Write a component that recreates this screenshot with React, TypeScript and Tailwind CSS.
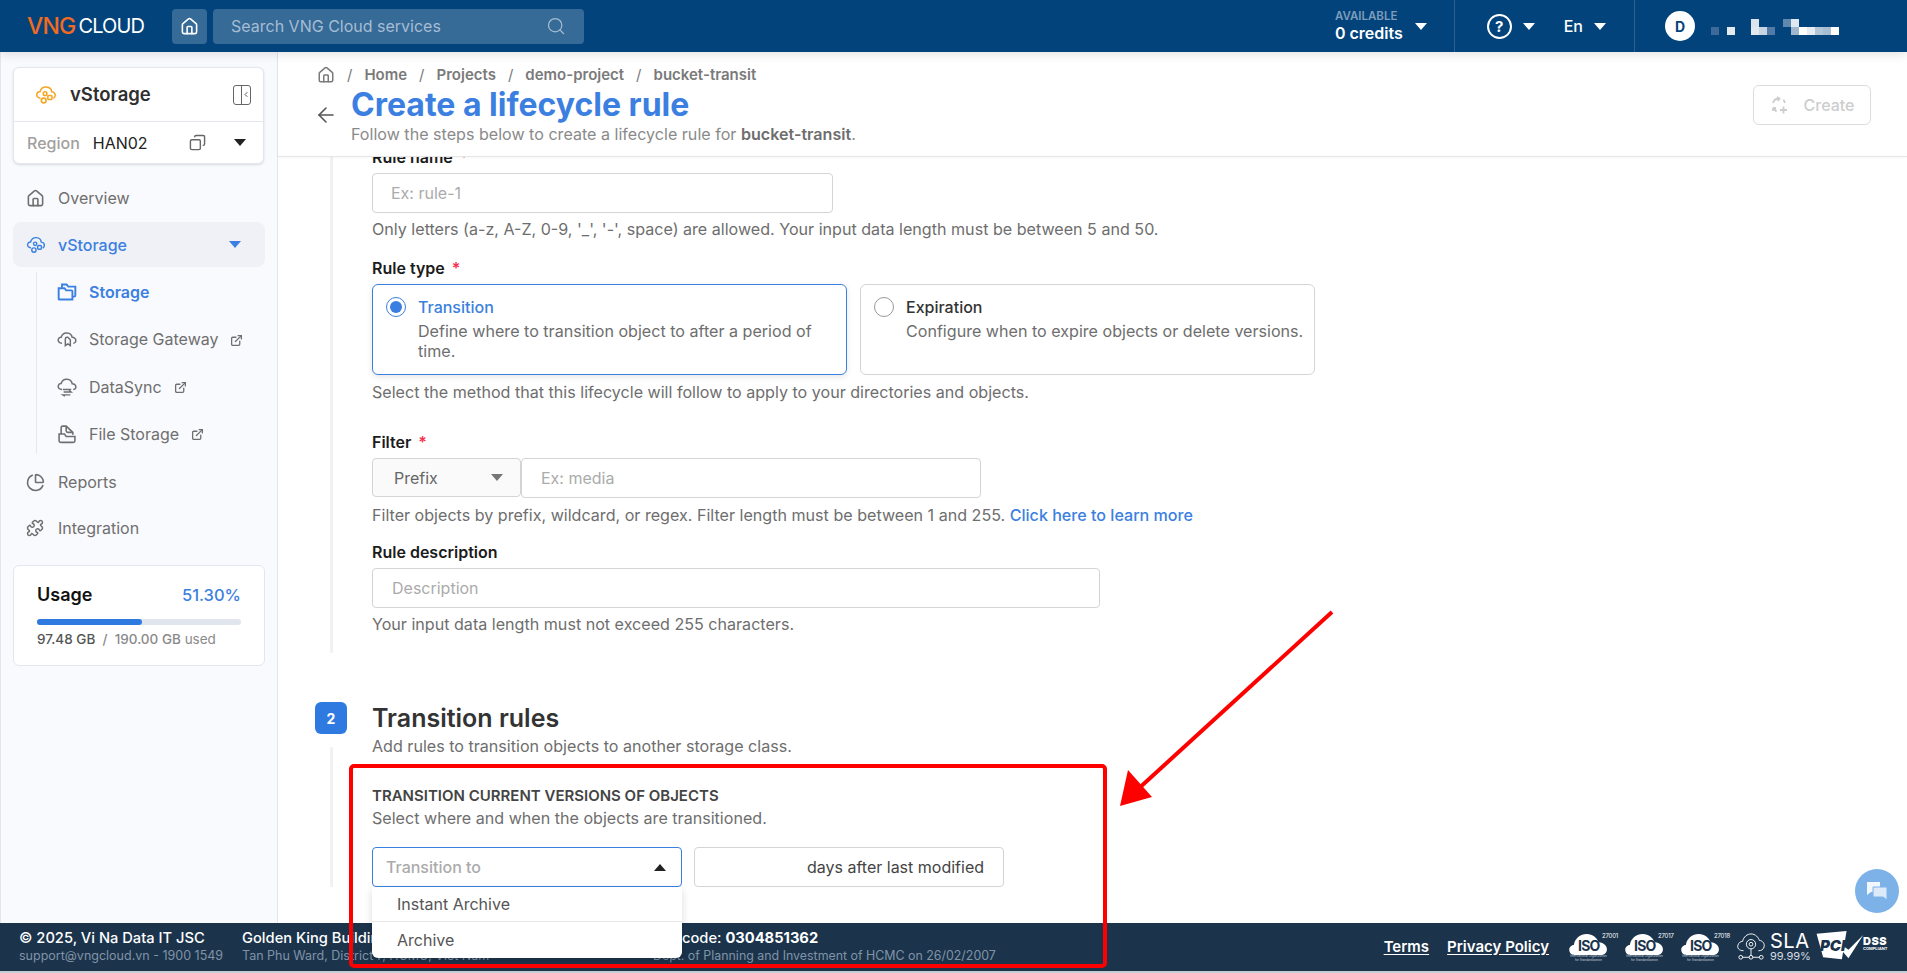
import { ArrowLeft, ChevronLeft, Copy, ExternalLink, Home, PieChart, Puzzle, Search } from 'lucide-react';

const font = 'font-["Inter","Liberation_Sans",sans-serif]';

function Caret({ className = '', up = false }: { className?: string; up?: boolean }) {
  return (
    <svg viewBox="0 0 12 7" className={`h-[7px] w-3 fill-current ${className}`}>
      <path d={up ? 'M6 0 L12 7 L0 7 Z' : 'M0 0 L12 0 L6 7 Z'} />
    </svg>
  );
}

function StorageIcon({ className = '' }: { className?: string }) {
  return (
    <svg viewBox="0 0 24 24" fill="none" stroke="currentColor" strokeWidth="1.7" className={className}>
      <path d="M6 15.5 C2.5 15 1.5 12.8 2 11 C2.5 9 4 8.2 5.5 8.4 C6.5 4.8 9.5 3 12.5 3.2 C16 3.5 18 6 18.3 8.5 C20.8 8.8 22.5 10.6 22 13 C21.6 14.6 20.8 15.3 20 15.6" />
      <circle cx="11" cy="10.5" r="2" />
      <rect x="14" y="12.5" width="4.5" height="4.5" rx="1" />
      <circle cx="9.5" cy="18" r="2.6" />
    </svg>
  );
}

function GatewayIcon() {
  return (
    <svg viewBox="0 0 24 24" fill="none" stroke="currentColor" strokeWidth="1.8" className="h-5 w-5">
      <path d="M6 17 C2.5 17 1 14.6 1.5 12.5 C2 10.5 3.5 9.6 5 9.8 C6 6.4 9 4.6 12 4.8 C15.5 5 17.8 7.4 18.2 10 C21 10 23 12 22.6 14.4 C22.3 16 21 17 19.5 17" />
      <path d="M10 20 V12 C10 10.8 11 10 12 10 H13 L16 13 V20 L13 18 Z" />
    </svg>
  );
}

function SyncIcon() {
  return (
    <svg viewBox="0 0 24 24" fill="none" stroke="currentColor" strokeWidth="1.8" className="h-5 w-5">
      <path d="M6 15 C2.5 15 1 12.8 1.5 10.5 C2 8.5 3.5 7.6 5 7.8 C6 4.4 9 2.6 12 2.8 C15.5 3 17.8 5.4 18.2 8 C21 8 23 10 22.6 12.4 C22.3 14 21 15 19.5 15" />
      <path d="M7 15 H17" />
      <path d="M8 18 H17 L14.5 16 M16 21.5 H7 L9.5 23" strokeWidth="1.6" />
    </svg>
  );
}

function FileStorageIcon() {
  return (
    <svg viewBox="0 0 24 24" fill="none" stroke="currentColor" strokeWidth="1.9" className="h-5 w-5">
      <path d="M5 12 V4 C5 3 6 2.5 7 2.5 H11 L19 10 V13" />
      <path d="M11 3 L11 8 C11 9 12 10 13 10 H19" />
      <path d="M2.5 12 H9 L11 15 H21.5 V20 C21.5 21 20.5 22 19.5 22 H4.5 C3.5 22 2.5 21 2.5 20 Z" />
    </svg>
  );
}

function FolderIcon() {
  return (
    <svg viewBox="0 0 24 24" fill="none" stroke="currentColor" strokeWidth="2.3" className="h-5 w-5">
      <path d="M2 20 V7.5 H9 L11 10 H17 C18 10 18.5 10.6 18.5 11.5 V21 H3 C2.4 21 2 20.6 2 20 Z" />
      <path d="M6 7 V3 H11.5 L13.5 5.5 H22 V16 C22 17 21.4 17.5 20.5 17.5 H18.5" />
    </svg>
  );
}

function NavItem({ icon, label }: { icon: React.ReactNode; label: string }) {
  return (
    <div className="flex h-[46px] items-center gap-[13px] pl-[24px] text-[16px] text-[#6f6f6f]">
      <span className="flex w-5 justify-center">{icon}</span>
      <span>{label}</span>
    </div>
  );
}

function Header() {
  return (
    <header className="relative z-20 flex h-[52px] shrink-0 items-center bg-[#02437b] text-white shadow-[0_2px_10px_rgba(0,0,0,0.12)]">
      <div className="ml-[27px] flex w-[118px] items-center leading-none">
        <span className="text-[23px] font-medium tracking-[-0.8px] text-[#f26a21]">VNG</span>
        <span className="ml-[3px] text-[20px] font-normal tracking-[-0.9px]">CLOUD</span>
      </div>
      <div className="ml-[27px] flex h-[35px] w-[35px] items-center justify-center rounded bg-[#366a97]">
        <Home className="h-[19px] w-[19px]" strokeWidth={2} />
      </div>
      <div className="ml-[6px] flex h-[35px] w-[371px] items-center justify-between rounded bg-[#366a97] pl-[18px] pr-[18px] text-[16px] text-[#a6bdd3]">
        Search VNG Cloud services
        <Search className="h-[20px] w-[20px]" strokeWidth={1.5} />
      </div>
      <div className="ml-auto flex h-full items-center">
        <div className="flex h-full items-center gap-[12px] border-r border-[#2a6090] pl-[34px] pr-[27px]">
          <div className="leading-none">
            <div className="text-[11.5px] font-semibold text-[#7d9dbb]">AVAILABLE</div>
            <div className="mt-[3px] text-[16px] font-semibold">0 credits</div>
          </div>
          <Caret className="text-white" />
        </div>
        <div className="flex h-full items-center border-r border-[#2a6090] pl-[32px] pr-[28px]">
          <div className="flex h-[25px] w-[25px] items-center justify-center rounded-full border-2 border-white text-[15px] font-bold leading-none">?</div>
          <Caret className="ml-[11px] text-white" />
          <span className="ml-[29px] text-[16px] font-medium">En</span>
          <Caret className="ml-[11px] text-white" />
        </div>
        <div className="flex h-full w-[272px] items-center pl-[30px]">
          <div className="flex h-[30px] w-[30px] items-center justify-center rounded-full bg-white text-[14px] font-bold text-[#02437b]">D</div>
          {/* blurred user name */}
          <svg width="128" height="22" className="ml-[16px]">
            <rect x="0" y="12" width="8" height="8" fill="#3d6a99" />
            <rect x="16" y="12" width="8" height="8" fill="#e5eaf0" />
            <rect x="40" y="4" width="8" height="8" fill="#dbe3ec" />
            <rect x="40" y="12" width="8" height="8" fill="#e1e8f0" />
            <rect x="48" y="12" width="8" height="8" fill="#c8d4e2" />
            <rect x="56" y="12" width="8" height="8" fill="#4f7ba6" />
            <rect x="72" y="4" width="8" height="8" fill="#5f88ae" />
            <rect x="80" y="4" width="8" height="8" fill="#dfe7ef" />
            <rect x="80" y="12" width="8" height="8" fill="#a0b6cc" />
            <rect x="88" y="12" width="8" height="8" fill="#ffffff" />
            <rect x="96" y="12" width="8" height="8" fill="#e6ebf2" />
            <rect x="104" y="12" width="8" height="8" fill="#b3c5d8" />
            <rect x="112" y="12" width="8" height="8" fill="#a6bdd2" />
            <rect x="120" y="12" width="8" height="8" fill="#ffffff" />
          </svg>
        </div>
      </div>
    </header>
  );
}

function Sidebar() {
  return (
    <aside className="flex w-[278px] shrink-0 flex-col border-x border-[#e3e6ef] bg-[#f9fafd] pt-[15px]">
      <div className="ml-[12px] w-[251px] rounded-md border border-[#e3e6ef] bg-white shadow-sm">
        <div className="flex h-[54px] items-center border-b border-[#e3e6ef] pl-[21px] pr-[12px]">
          <StorageIcon className="h-[22px] w-[22px] text-[#f5a623]" />
          <span className="ml-[13px] text-[18.5px] font-semibold text-[#2f2f2f]">vStorage</span>
          <span className="ml-auto flex h-[20px] w-[18px] items-center justify-end rounded-[3px] border-[1.5px] border-[#666]">
            <span className="flex h-full w-[9px] items-center justify-center border-l-[1.5px] border-[#666]">
              <ChevronLeft className="h-[9px] w-[8px] text-[#555]" strokeWidth={3} />
            </span>
          </span>
        </div>
        <div className="flex h-[41px] items-center pl-[13px] pr-[17px] text-[16px]">
          <span className="font-medium text-[#a0a0a0]">Region</span>
          <span className="ml-[13px] text-[#222]">HAN02</span>
          <Copy className="ml-auto h-[17px] w-[17px] -scale-x-100 text-[#666]" strokeWidth={2} />
          <Caret className="ml-[28px] text-[#222]" />
        </div>
      </div>
      <div className="mt-[11px]">
        <NavItem icon={<Home className="h-[19px] w-[19px]" strokeWidth={2} />} label="Overview" />
      </div>
      <div className="ml-[12px] mt-[1px] flex h-[45px] w-[252px] items-center rounded-lg bg-[#eff1f6] pl-[13px] pr-[24px] text-[16px] font-medium text-[#3b80e0]">
        <StorageIcon className="h-5 w-5" />
        <span className="ml-[12px]">vStorage</span>
        <Caret className="ml-auto" />
      </div>
      <div className="ml-[35px] mt-[5px] flex h-[182px] flex-col justify-between border-l border-[#e6e8ee] py-[1px]">
        <div className="flex h-[38px] items-center gap-[12px] pl-[20px] text-[16px] font-semibold text-[#3b80e0]">
          <FolderIcon />
          Storage
        </div>
        {[
          { label: 'Storage Gateway', icon: <GatewayIcon /> },
          { label: 'DataSync', icon: <SyncIcon /> },
          { label: 'File Storage', icon: <FileStorageIcon /> },
        ].map((item) => (
          <div key={item.label} className="flex h-[38px] items-center gap-[12px] pl-[20px] text-[16px] text-[#6f6f6f]">
            {item.icon}
            <span>{item.label}</span>
            <ExternalLink className="mt-[2px] h-[13px] w-[13px]" strokeWidth={2.4} />
          </div>
        ))}
      </div>
      <div className="mt-[5px]">
        <NavItem icon={<PieChart className="h-[19px] w-[19px]" strokeWidth={2} />} label="Reports" />
        <NavItem icon={<Puzzle className="h-[18px] w-[18px]" strokeWidth={2} />} label="Integration" />
      </div>
      <div className="ml-[12px] mt-[14px] w-[252px] rounded-md border border-[#e3e6ef] bg-white px-[23px] pb-[17px] pt-[16px]">
        <div className="flex items-center justify-between">
          <span className="text-[18px] font-semibold leading-[26px] text-[#111]">Usage</span>
          <span className="text-[16.5px] font-medium text-[#3b80e0]">51.30%</span>
        </div>
        <div className="mt-[11px] h-[6px] rounded-full bg-[#e1e5ed]">
          <div className="h-full w-[51.3%] rounded-full bg-[#2f7ae0]" />
        </div>
        <div className="mt-[5px] whitespace-nowrap text-[13.5px] leading-[18px] text-[#8a8a8a]">
          <span className="font-medium text-[#555]">97.48 GB</span>
          <span className="font-medium"> &nbsp;/&nbsp; 190.00 GB</span> used
        </div>
      </div>
    </aside>
  );
}

function Label({ text, required = false }: { text: string; required?: boolean }) {
  return (
    <div className="text-[16px] font-semibold leading-[20px] text-[#1b1b1b]">
      {text}
      {required && <span className="ml-[7px] text-[#f5334f]">*</span>}
    </div>
  );
}

function Help({ children }: { children: React.ReactNode }) {
  return <p className="text-[16.1px] leading-[20px] text-[#6e6e6e]">{children}</p>;
}

function TextBox({ placeholder, className = '' }: { placeholder: string; className?: string }) {
  return (
    <div className={`flex h-[40px] items-center rounded border border-[#d4d4d4] bg-white pl-[18px] text-[16px] text-[#ababab] ${className}`}>
      {placeholder}
    </div>
  );
}

function TitleBar() {
  return (
    <div className="relative z-10 h-[105px] shrink-0 border-b border-[#e6e6e6] bg-white shadow-[0_1px_3px_rgba(0,0,0,0.03)]">
      <div className="flex h-[34px] items-center pl-[39px] pt-[12px] text-[15px] font-semibold text-[#7a7a7a]">
        <Home className="h-[18px] w-[18px]" strokeWidth={2} />
        <span className="mx-[12px] font-normal">/</span>Home
        <span className="mx-[12px] font-normal">/</span>Projects
        <span className="mx-[12px] font-normal">/</span>demo-project
        <span className="mx-[12px] font-normal">/</span>bucket-transit
      </div>
      <div className="flex items-start pl-[36px] pr-[36px]">
        <ArrowLeft className="mt-[17px] h-[24px] w-[24px] text-[#555]" strokeWidth={1.6} />
        <div className="ml-[13px]">
          <h1 className="text-[32px] font-bold leading-[38px] text-[#3b80e0]">Create a lifecycle rule</h1>
          <p className="text-[16.1px] leading-[20px] text-[#8a8a8a]">
            Follow the steps below to create a lifecycle rule for <span className="font-semibold text-[#6e6e6e]">bucket-transit</span>.
          </p>
        </div>
        <div className="ml-auto mt-[-1px] flex h-[40px] w-[118px] items-center justify-center gap-[16px] rounded-md border border-[#dcdcdc] text-[16px] font-medium text-[#cdcdcd]">
          <svg viewBox="0 0 18 18" fill="none" stroke="currentColor" strokeWidth="1.8" className="h-[18px] w-[18px]">
            <path d="M3 7 C4 3.5 6 2.5 9 2.5 M7 1 L9.5 2.5 L8 5 M13.5 3.5 L15 7 M3 12 L6.5 15.5 M3 12 H6 M3 12 V15 M10 14 H17 M13.5 10.5 V17.5" />
          </svg>
          Create
        </div>
      </div>
    </div>
  );
}

function RuleCard({ active, title, children }: { active: boolean; title: string; children: React.ReactNode }) {
  return (
    <div className={`flex h-[91px] gap-[12px] rounded-md border bg-white px-[13px] pt-[12px] ${active ? 'w-[475px] border-[#3b80e0] shadow-[0_2px_6px_rgba(0,0,0,0.1)]' : 'w-[455px] whitespace-nowrap border-[#d4d4d4]'}`}>
      <span className={`flex h-5 w-5 shrink-0 items-center justify-center rounded-full border ${active ? 'border-[#3b80e0]' : 'border-[#9a9a9a]'}`}>
        {active && <span className="h-3 w-3 rounded-full bg-[#3b80e0]" />}
      </span>
      <div>
        <div className={`text-[16px] font-medium leading-[20px] ${active ? 'text-[#3b80e0]' : 'text-[#333]'}`}>{title}</div>
        <div className="mt-[4px] text-[16.1px] leading-[20px] text-[#6e6e6e]">{children}</div>
      </div>
    </div>
  );
}

function Content() {
  return (
    <div className="min-h-0 flex-1 overflow-hidden bg-white">
      <div className="ml-[52px] mt-[-10px] pl-[42px]">
        <Label text="Rule name" required />
        <TextBox placeholder="Ex: rule-1" className="mt-[6px] w-[461px]" />
        <div className="mt-[6px]">
          <Help>Only letters (a-z, A-Z, 0-9, '_', '-', space) are allowed. Your input data length must be between 5 and 50.</Help>
        </div>
        <div className="mt-[19px]">
          <Label text="Rule type" required />
        </div>
        <div className="mt-[6px] flex gap-[13px]">
          <RuleCard active title="Transition">Define where to transition object to after a period of time.</RuleCard>
          <RuleCard active={false} title="Expiration">Configure when to expire objects or delete versions.</RuleCard>
        </div>
        <div className="mt-[7px]">
          <Help>Select the method that this lifecycle will follow to apply to your directories and objects.</Help>
        </div>
        <div className="mt-[30px]">
          <Label text="Filter" required />
        </div>
        <div className="mt-[6px] flex">
          <div className="flex h-[39px] w-[149px] items-center justify-between rounded border border-[#d4d4d4] bg-[#fafafa] pl-[21px] pr-[17px] text-[16px] text-[#666]">
            Prefix
            <Caret className="text-[#777]" />
          </div>
          <TextBox placeholder="Ex: media" className="h-[39px] w-[460px] pl-[19px]" />
        </div>
        <div className="mt-[7px]">
          <Help>
            Filter objects by prefix, wildcard, or regex. Filter length must be between 1 and 255.{' '}
            <span className="font-medium text-[#3b80e0]">Click here to learn more</span>
          </Help>
        </div>
        <div className="mt-[17px]">
          <Label text="Rule description" />
        </div>
        <TextBox placeholder="Description" className="mt-[6px] w-[728px] pl-[19px]" />
        <div className="mt-[6px]">
          <Help>Your input data length must not exceed 255 characters.</Help>
        </div>
      </div>
      <div className="ml-[37px] mt-[68px] flex items-center gap-[25px]">
        <span className="flex h-8 w-8 items-center justify-center rounded-md bg-[#2f7ae0] text-[14px] font-bold text-white">2</span>
        <h2 className="text-[25px] font-semibold leading-8 text-[#333]">Transition rules</h2>
      </div>
      <div className="ml-[52px] mt-[2px] pl-[42px]">
        <Help>Add rules to transition objects to another storage class.</Help>
        <div className="mt-[30px] text-[15px] font-semibold leading-[20px] text-[#444]">TRANSITION CURRENT VERSIONS OF OBJECTS</div>
        <div className="mt-[2px]">
          <Help>Select where and when the objects are transitioned.</Help>
        </div>
        <div className="mt-[19px] flex gap-[12px]">
          <div className="flex h-[40px] w-[310px] items-center justify-between rounded border border-[#3b80e0] pl-[13px] pr-[15px] text-[16px] font-medium text-[#ababab]">
            Transition to
            <Caret up className="text-[#222]" />
          </div>
          <div className="flex h-[40px] w-[310px] items-center justify-end rounded border border-[#d4d4d4] pr-[19px] text-[16px] text-[#444]">
            days after last modified
          </div>
        </div>
      </div>
    </div>
  );
}

function IsoBadge({ code }: { code: string }) {
  return (
    <div className="relative h-[30px] w-[48px]">
      <svg viewBox="0 0 42 24" className="absolute left-0 top-[1px] h-[22px] w-[39px] fill-white">
        <path d="M6 24 C1 24 0 20 0 18 C0 15 3 13 5 13 C6 6 12 1 19 1 C26 1 30 5 32 10 C38 10 42 15 41 19 C40 23 37 24 34 24 Z" />
      </svg>
      <span className="absolute left-[9px] top-[5px] text-[14px] font-bold leading-[18px] tracking-[-0.8px] text-[#1b344c]">ISO</span>
      <span className="absolute left-[33px] top-[1px] text-[6px] leading-[6px] tracking-[-0.2px] text-white">{code}</span>
      <span className="absolute left-0 top-[23px] w-[39px] text-center text-[3px] leading-[3.5px] text-[#c6d0da]">International Organization for Standardization</span>
    </div>
  );
}

function Footer() {
  return (
    <footer className="flex h-[50px] shrink-0 items-center border-b-2 border-[#c4ccd4] bg-[#1b344c] pl-[19px] pr-[18px] text-white">
      <div className="w-[223px] leading-[17px]">
        <div className="text-[14.7px] font-medium">© 2025, Vi Na Data IT JSC</div>
        <div className="text-[12.5px] text-[#8093a6]">support@vngcloud.vn - 1900 1549</div>
      </div>
      <div className="w-[411px] overflow-hidden whitespace-nowrap leading-[17px]">
        <div className="text-[14.7px] font-medium">Golden King Building, 15 Nguyen Luong Bang</div>
        <div className="text-[12.5px] text-[#8093a6]">Tan Phu Ward, District 7, HCMC, Viet Nam</div>
      </div>
      <div className="leading-[17px]">
        <div className="text-[14.7px] font-medium">Tax code: <span className="font-bold">0304851362</span></div>
        <div className="text-[12.4px] text-[#8093a6]">Dept. of Planning and Investment of HCMC on 26/02/2007</div>
      </div>
      <div className="ml-auto flex items-center">
        <span className="text-[15px] font-semibold underline underline-offset-2">Terms</span>
        <span className="ml-[18px] text-[15px] font-semibold underline underline-offset-2">Privacy Policy</span>
        <div className="ml-[20px] flex items-center gap-[8px]">
          <IsoBadge code="27001" />
          <IsoBadge code="27017" />
          <IsoBadge code="27018" />
        </div>
        <div className="ml-[8px] flex items-center">
          <svg viewBox="0 0 30 32" fill="none" stroke="white" strokeWidth="1" className="h-[30px] w-[28px]">
            <path d="M7 20 C2 20 0 17 1 14 C2 11 4 10 6 10 C7 5 11 2 15 2 C20 2 23 6 24 9 C27 9 30 12 29 16 C28 19 26 20 23 20" />
            <circle cx="15" cy="13" r="5" />
            <circle cx="15" cy="13" r="2" />
            <path d="M15 18 V27 M4 27 H26" />
            <circle cx="4" cy="27" r="2" fill="#1b344c" />
            <circle cx="15" cy="27" r="2" fill="#1b344c" />
            <circle cx="26" cy="27" r="2" fill="#1b344c" />
          </svg>
          <div className="ml-[5px] w-[42px] leading-none">
            <div className="text-[20px] font-normal leading-[18px] tracking-[0.5px]">SLA</div>
            <div className="whitespace-nowrap text-[11px] leading-[12px] text-[#d5dce3]">99.99%</div>
          </div>
        </div>
        <div className="relative ml-[4px] h-[32px] w-[73px]">
          <svg viewBox="0 0 50 32" className="absolute left-0 top-0 h-[30px] w-[48px]">
            <path d="M0 3 L32 0 L27 30 L7 28 Z" fill="white" />
            <path d="M28 22 L34 29 L50 4 L34 20 L30 17 Z" fill="white" />
          </svg>
          <span className="absolute left-[4px] top-[7px] text-[15px] font-black italic leading-[15px] text-[#1b344c]">PCI</span>
          <span className="absolute left-[47px] top-[4px] text-[11px] font-black leading-[12px] tracking-[0.5px]">DSS</span>
          <span className="absolute left-[47px] top-[15px] text-[4px] font-bold leading-[5px]">COMPLIANT</span>
        </div>
      </div>
    </footer>
  );
}

export default function App() {
  return (
    <div className={`relative flex h-[973px] w-[1907px] flex-col overflow-hidden bg-white ${font}`}>
      <Header />
      <div className="flex min-h-0 flex-1">
        <Sidebar />
        <main className="flex min-w-0 flex-1 flex-col">
          <TitleBar />
          <Content />
        </main>
      </div>
      <Footer />

      {/* vertical step rails */}
      <div className="absolute left-[330px] top-[157px] h-[496px] w-[3px] bg-[#f1f1f1]" />
      <div className="absolute left-[330px] top-[747px] h-[140px] w-[3px] bg-[#f1f1f1]" />

      {/* open dropdown */}
      <div className="absolute left-[372px] top-[887px] z-30 w-[310px] rounded-b-md bg-white text-[16px] text-[#555] shadow-[0_3px_8px_rgba(0,0,0,0.15)]">
        <div className="flex h-[35px] items-center border-b border-[#e8e8e8] pl-[25px]">Instant Archive</div>
        <div className="flex h-[36px] items-center pl-[25px]">Archive</div>
      </div>

      {/* chat bubble */}
      <div className="absolute left-[1855px] top-[869px] z-30 flex h-[44px] w-[44px] items-center justify-center rounded-full bg-[#7db2e8]">
        <svg viewBox="0 0 24 24" className="h-[24px] w-[24px]">
          <path d="M2 3 H15 V13 H6 L2 16 Z" fill="#f2f7fd" />
          <path d="M8 8 H22 V18 V21 L18 18 H8 Z" fill="#dbe9f8" stroke="#7db2e8" strokeWidth="1" />
        </svg>
      </div>

      {/* annotation */}
      <div className="absolute left-[349px] top-[764px] z-40 h-[204px] w-[758px] rounded-[5px] border-4 border-[#fe0000]" />
      <svg className="absolute left-[1110px] top-[600px] z-40 h-[220px] w-[240px]" viewBox="0 0 240 220">
        <path d="M222 12 L15 201" stroke="#fe0000" strokeWidth="4" />
        <path d="M10 206 L18 170 L42 197 Z" fill="#fe0000" />
      </svg>
    </div>
  );
}
